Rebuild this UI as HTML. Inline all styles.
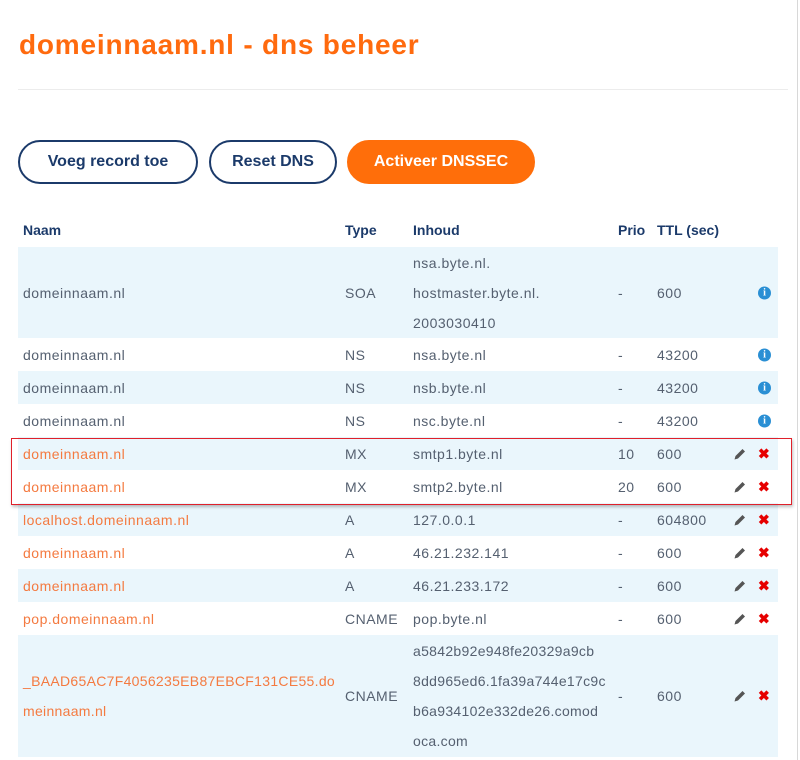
<!DOCTYPE html>
<html><head><meta charset="utf-8"><style>
*{margin:0;padding:0;box-sizing:border-box}
body{width:800px;height:760px;background:#fff;font-family:"Liberation Sans",sans-serif;position:relative;overflow:hidden;color:#556070}
.edge{position:absolute;left:797px;top:0;width:1px;height:760px;background:#d8d8d8}
h1{position:absolute;left:19px;top:29px;font-size:28px;color:#ff6a0e;font-weight:bold;letter-spacing:0.8px}
.hr{position:absolute;left:18px;top:89px;width:770px;height:1px;background:#ececec}
.btn{position:absolute;top:140px;height:44px;border:2px solid #1b3a6a;border-radius:22px;font-weight:bold;font-size:16px;color:#1b3a6a;text-align:center;line-height:40px}
.btn.o{background:#ff6e0a;border-color:#ff6e0a;color:#fff}
.th{position:absolute;top:222px;font-size:14px;font-weight:bold;color:#1b3a6a}
.row{position:absolute;left:18px;width:760px;font-size:14px;letter-spacing:0.5px}
.row.b{background:#eaf6fc}
.c{position:absolute;top:0;height:100%;display:flex;flex-direction:column;justify-content:center;line-height:30px;white-space:nowrap}
.n{left:5px}.t{left:327px}.i{left:395px}.p{left:600px}.l{left:639px}
.or{color:#f47a40}
.ic{position:absolute;top:50%;transform:translateY(-50%)}
.info{left:740px;width:13px;height:13px;border-radius:50%;background:#2a8fd4;color:#fff;font-size:10px;font-weight:bold;text-align:center;line-height:13px;font-family:"Liberation Serif",serif;letter-spacing:0}
.x{left:740px;color:#e60000;font-weight:bold;font-size:14px;letter-spacing:0}
.red{position:absolute;left:11px;top:438px;width:781px;height:67px;border:1.5px solid #e0202a;box-shadow:1px 2px 3px rgba(0,0,0,.25)}
.cn{letter-spacing:0.3px}
</style></head><body>
<div class="edge"></div>
<h1>domeinnaam.nl - dns beheer</h1>
<div class="hr"></div>
<div class="btn" style="left:18px;width:180px">Voeg record toe</div>
<div class="btn" style="left:209px;width:128px">Reset DNS</div>
<div class="btn o" style="left:347px;width:188px">Activeer DNSSEC</div>
<div class="th" style="left:23px">Naam</div>
<div class="th" style="left:345px">Type</div>
<div class="th" style="left:413px">Inhoud</div>
<div class="th" style="left:618px">Prio</div>
<div class="th" style="left:657px">TTL (sec)</div>

<div class="row b" style="top:247px;height:91px"><div class="c n">domeinnaam.nl</div><div class="c t">SOA</div><div class="c i"><span>nsa.byte.nl.</span><span>hostmaster.byte.nl.</span><span>2003030410</span></div><div class="c p">-</div><div class="c l">600</div><div class="ic info">i</div></div>
<div class="row" style="top:338px;height:33px"><div class="c n">domeinnaam.nl</div><div class="c t">NS</div><div class="c i">nsa.byte.nl</div><div class="c p">-</div><div class="c l">43200</div><div class="ic info">i</div></div>
<div class="row b" style="top:371px;height:33px"><div class="c n">domeinnaam.nl</div><div class="c t">NS</div><div class="c i">nsb.byte.nl</div><div class="c p">-</div><div class="c l">43200</div><div class="ic info">i</div></div>
<div class="row" style="top:404px;height:33px"><div class="c n">domeinnaam.nl</div><div class="c t">NS</div><div class="c i">nsc.byte.nl</div><div class="c p">-</div><div class="c l">43200</div><div class="ic info">i</div></div>

<div class="row b" style="top:437px;height:33px"><div class="c n or">domeinnaam.nl</div><div class="c t">MX</div><div class="c i">smtp1.byte.nl</div><div class="c p">10</div><div class="c l">600</div>
<svg class="ic" style="left:715px" width="14" height="14" viewBox="0 0 14 14"><path d="M1.5 12.5l1-3.5 7-7 2.5 2.5-7 7z" fill="#555"/></svg><div class="ic x">✖</div></div>
<div class="row" style="top:470px;height:33px"><div class="c n or">domeinnaam.nl</div><div class="c t">MX</div><div class="c i">smtp2.byte.nl</div><div class="c p">20</div><div class="c l">600</div>
<svg class="ic" style="left:715px" width="14" height="14" viewBox="0 0 14 14"><path d="M1.5 12.5l1-3.5 7-7 2.5 2.5-7 7z" fill="#555"/></svg><div class="ic x">✖</div></div>
<div class="row b" style="top:503px;height:33px"><div class="c n or">localhost.domeinnaam.nl</div><div class="c t">A</div><div class="c i">127.0.0.1</div><div class="c p">-</div><div class="c l">604800</div>
<svg class="ic" style="left:715px" width="14" height="14" viewBox="0 0 14 14"><path d="M1.5 12.5l1-3.5 7-7 2.5 2.5-7 7z" fill="#555"/></svg><div class="ic x">✖</div></div>
<div class="row" style="top:536px;height:33px"><div class="c n or">domeinnaam.nl</div><div class="c t">A</div><div class="c i">46.21.232.141</div><div class="c p">-</div><div class="c l">600</div>
<svg class="ic" style="left:715px" width="14" height="14" viewBox="0 0 14 14"><path d="M1.5 12.5l1-3.5 7-7 2.5 2.5-7 7z" fill="#555"/></svg><div class="ic x">✖</div></div>
<div class="row b" style="top:569px;height:33px"><div class="c n or">domeinnaam.nl</div><div class="c t">A</div><div class="c i">46.21.233.172</div><div class="c p">-</div><div class="c l">600</div>
<svg class="ic" style="left:715px" width="14" height="14" viewBox="0 0 14 14"><path d="M1.5 12.5l1-3.5 7-7 2.5 2.5-7 7z" fill="#555"/></svg><div class="ic x">✖</div></div>
<div class="row" style="top:602px;height:33px"><div class="c n or">pop.domeinnaam.nl</div><div class="c t">CNAME</div><div class="c i">pop.byte.nl</div><div class="c p">-</div><div class="c l">600</div>
<svg class="ic" style="left:715px" width="14" height="14" viewBox="0 0 14 14"><path d="M1.5 12.5l1-3.5 7-7 2.5 2.5-7 7z" fill="#555"/></svg><div class="ic x">✖</div></div>
<div class="row b" style="top:635px;height:122px"><div class="c n or cn"><span>_BAAD65AC7F4056235EB87EBCF131CE55.do</span><span>meinnaam.nl</span></div><div class="c t">CNAME</div><div class="c i cn"><span>a5842b92e948fe20329a9cb</span><span>8dd965ed6.1fa39a744e17c9c</span><span>b6a934102e332de26.comod</span><span>oca.com</span></div><div class="c p">-</div><div class="c l">600</div>
<svg class="ic" style="left:715px" width="14" height="14" viewBox="0 0 14 14"><path d="M1.5 12.5l1-3.5 7-7 2.5 2.5-7 7z" fill="#555"/></svg><div class="ic x">✖</div></div>

<div class="red"></div>
</body></html>
